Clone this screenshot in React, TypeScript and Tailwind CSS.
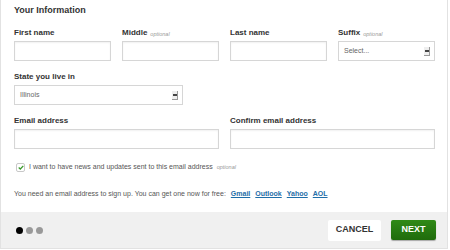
import React from 'react';

const SelectArrow = () => (
  <span className="flex h-[9px] w-[6px] flex-col items-center justify-center border-r border-b border-[#999] bg-[#eee]">
    <span className="block h-[2px] w-[4px] bg-[#444]" />
  </span>
);

const Label = ({ text, optional }: { text: string; optional?: boolean }) => (
  <div className="mb-[4px] flex h-[9px] items-end gap-[3px] leading-none">
    <span className="text-[8px] font-bold text-[#333]">{text}</span>
    {optional && <span className="text-[5.5px] italic text-[#999]">optional</span>}
  </div>
);

const TextBox = ({ width }: { width: string }) => (
  <div className={`${width} h-[20px] border border-[#d6d6d6] bg-white shadow-[inset_0_1px_2px_rgba(0,0,0,0.06)]`} />
);

const App = () => {
  return (
    <div className="flex h-[250px] w-[450px] flex-col bg-white font-['Liberation_Sans',Arial,sans-serif]">
      <div className="flex h-[249px] w-[448px] flex-col border-x border-b border-[#e2e2e2]">
        <div className="flex-1 px-[13px] pt-[4px]">
          <h1 className="text-[9px] font-bold leading-[12px] text-[#333]">Your Information</h1>

          <div className="mt-[12px] flex gap-[11px]">
            <div>
              <Label text="First name" />
              <TextBox width="w-[97px]" />
            </div>
            <div>
              <Label text="Middle" optional />
              <TextBox width="w-[97px]" />
            </div>
            <div>
              <Label text="Last name" />
              <TextBox width="w-[97px]" />
            </div>
            <div>
              <Label text="Suffix" optional />
              <div className="flex h-[20px] w-[97px] items-center justify-between border border-[#d6d6d6] bg-white pl-[5px] pr-[4px]">
                <span className="text-[7px] text-[#666]">Select...</span>
                <SelectArrow />
              </div>
            </div>
          </div>

          <div className="mt-[11px]">
            <Label text="State you live in" />
            <div className="flex h-[20px] w-[169px] items-center justify-between border border-[#d6d6d6] bg-white pl-[5px] pr-[4px]">
              <span className="text-[7px] text-[#666]">Illinois</span>
              <SelectArrow />
            </div>
          </div>

          <div className="mt-[11px] flex gap-[11px]">
            <div>
              <Label text="Email address" />
              <TextBox width="w-[205px]" />
            </div>
            <div>
              <Label text="Confirm email address" />
              <TextBox width="w-[205px]" />
            </div>
          </div>

          <div className="mt-[13px] flex items-center gap-[4px] pl-[2px]">
            <span className="flex h-[9px] w-[9px] items-center justify-center rounded-[2px] border border-[#c8c8c8] bg-white">
              <svg width="6" height="5" viewBox="0 0 6 5">
                <path d="M0.7 2.6 L2.3 4 L5.3 0.9" fill="none" stroke="#3a9a2a" strokeWidth="1.3" />
              </svg>
            </span>
            <span className="text-[7px] text-[#555]">I want to have news and updates sent to this email address</span>
            <span className="text-[5.5px] italic text-[#999]">optional</span>
          </div>

          <p className="mt-[16px] flex items-center gap-[5px] text-[7px] text-[#555]">
            <span>You need an email address to sign up. You can get one now for free:</span>
            <a className="font-bold text-[#1f6ea8] underline">Gmail</a>
            <a className="font-bold text-[#1f6ea8] underline">Outlook</a>
            <a className="font-bold text-[#1f6ea8] underline">Yahoo</a>
            <a className="font-bold text-[#1f6ea8] underline">AOL</a>
          </p>
        </div>

        <div className="flex h-[36px] items-center justify-between bg-[#f0f0f0] pl-[15px] pr-[11px]">
          <div className="flex gap-[3px]">
            <span className="h-[7px] w-[7px] rounded-full bg-black" />
            <span className="h-[7px] w-[7px] rounded-full bg-[#999]" />
            <span className="h-[7px] w-[7px] rounded-full bg-[#999]" />
          </div>
          <div className="flex gap-[10px]">
            <button className="h-[21px] w-[53px] rounded-[2px] bg-white text-[9px] font-bold text-[#333]">CANCEL</button>
            <button className="h-[20px] w-[45px] rounded-[2px] bg-gradient-to-b from-[#2f8a17] to-[#1f6b0c] text-[9px] font-bold text-white shadow-[0_1px_1px_rgba(0,0,0,0.3)]">NEXT</button>
          </div>
        </div>
      </div>
    </div>
  );
};

export default App;
